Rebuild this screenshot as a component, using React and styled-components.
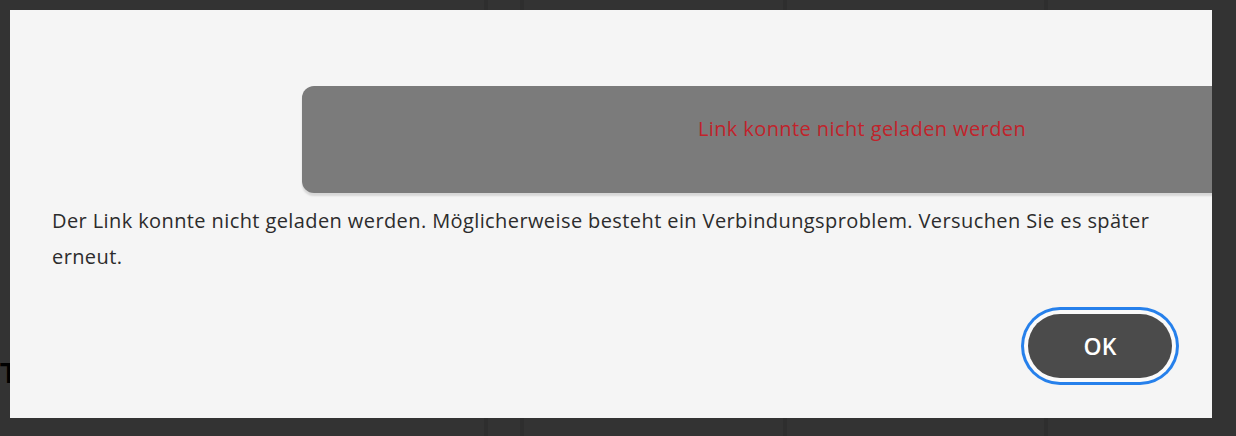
import React from "react";
import styled, { createGlobalStyle } from "styled-components";

const GlobalStyle = createGlobalStyle`
  html, body {
    margin: 0;
    padding: 0;
    width: 100%;
    height: 100%;
    overflow: hidden;
    background: #333333;
  }
  #root {
    height: 100%;
  }
`;

// Dark page behind the modal
const Page = styled.div`
  position: relative;
  width: 1236px;
  height: 436px;
  display: grid;
  grid-template-columns: 484px 32px 259px 257px 1fr;
  column-gap: 4px;
  background: #2e2e2e;
  font-family: "Open Sans", "Noto Sans", sans-serif;
`;

const Column = styled.div`
  background: #333333;
  padding-top: ${({ $top }) => $top || 0}px;
`;

const PageHeading = styled.div`
  font-family: "Liberation Sans", sans-serif;
  font-size: 30px;
  font-weight: 700;
  line-height: 1;
  color: #000;
`;

// Modal overlay
const Dialog = styled.div`
  position: absolute;
  left: 10px;
  top: 10px;
  width: 1202px;
  height: 408px;
  box-sizing: border-box;
  background: #f5f5f5;
  overflow: hidden;
  padding: 76px 40px 0 42px;
  display: flex;
  flex-direction: column;
`;

const Banner = styled.div`
  margin-left: 250px;
  width: 1120px;
  height: 107px;
  flex-shrink: 0;
  border-radius: 12px;
  background: #7b7b7b;
  box-shadow: 0 3px 2px rgba(0, 0, 0, 0.12);
  display: flex;
  align-items: center;
  justify-content: center;
  box-sizing: border-box;
  padding-bottom: 22px;
`;

const BannerText = styled.span`
  color: #c1232b;
  font-size: 20px;
  letter-spacing: 0.4px;
`;

const Message = styled.p`
  margin: 10px 0 0;
  font-size: 20px;
  letter-spacing: 0.4px;
  line-height: 36px;
  color: #2c2c2c;
`;

const Actions = styled.div`
  display: flex;
  justify-content: flex-end;
  margin-top: 39px;
`;

const OkButton = styled.button`
  width: 144px;
  height: 64px;
  border: none;
  border-radius: 32px;
  background: #4b4b4b;
  color: #fff;
  font-family: "Open Sans", "Noto Sans", sans-serif;
  font-size: 23px;
  font-weight: 600;
  box-shadow: 0 0 0 4px #fafafa, 0 0 0 7px #2680eb;
  cursor: pointer;
`;

export default function App() {
  return (
    <>
      <GlobalStyle />
      <Page>
        <Column $top={358}>
          <PageHeading>T</PageHeading>
        </Column>
        <Column />
        <Column />
        <Column />
        <Column />
        <Dialog role="dialog">
          <Banner>
            <BannerText>Link konnte nicht geladen werden</BannerText>
          </Banner>
          <Message>
            Der Link konnte nicht geladen werden. Möglicherweise besteht ein
            Verbindungsproblem. Versuchen Sie es später erneut.
          </Message>
          <Actions>
            <OkButton type="button">OK</OkButton>
          </Actions>
        </Dialog>
      </Page>
    </>
  );
}
